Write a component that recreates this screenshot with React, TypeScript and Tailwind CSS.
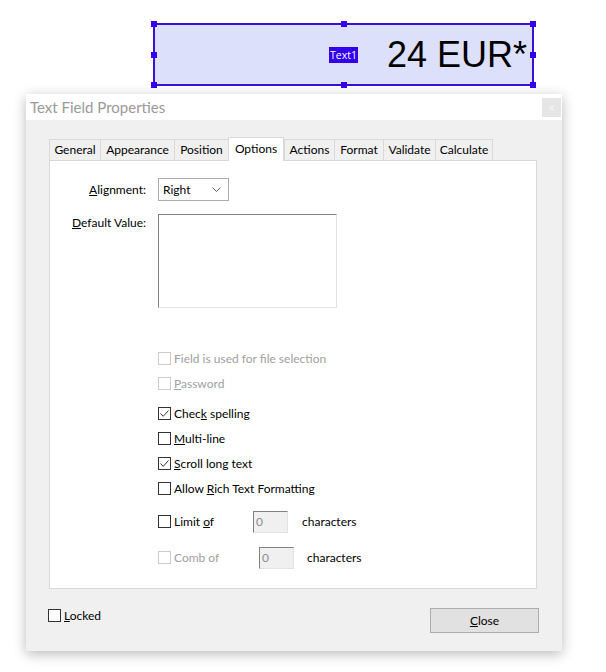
import React from "react";

type BoxProps = { checked?: boolean; disabled?: boolean };

const CheckBox = ({ checked, disabled }: BoxProps) => (
  <span
    className={`flex h-[13px] w-[13px] shrink-0 items-center justify-center border bg-white ${
      disabled ? "border-[#cccccc]" : "border-[#333333]"
    }`}
  >
    {checked && (
      <svg width="11" height="11" viewBox="0 0 11 11">
        <path d="M1.5 5.5 L4.2 8.3 L9.5 2.5" fill="none" stroke="#333" strokeWidth="1" />
      </svg>
    )}
  </span>
);

const Row = ({
  children,
  checked,
  disabled,
  className = "",
}: BoxProps & { children: React.ReactNode; className?: string }) => (
  <div className={`flex h-[25px] items-center ${className}`}>
    <CheckBox checked={checked} disabled={disabled} />
    <span className={`ml-[3px] pt-px ${disabled ? "text-[#a0a0a0]" : "text-black"}`}>{children}</span>
  </div>
);

const tabs = [
  { name: "General", w: "w-[52px]" },
  { name: "Appearance", w: "w-[75px]" },
  { name: "Position", w: "w-[55px]" },
  { name: "Options", w: "w-[56px]", active: true },
  { name: "Actions", w: "w-[51px]" },
  { name: "Format", w: "w-[50px]" },
  { name: "Validate", w: "w-[53px]" },
  { name: "Calculate", w: "w-[58px]" },
];

export default function App() {
  return (
    <div className="relative h-[672px] w-[606px] overflow-hidden bg-white pt-[23px] font-['Lato',sans-serif] text-[12px]">
      {/* form field on the page */}
      <div className="relative ml-[153px] flex h-[63px] w-[381px] items-center justify-end border-2 border-[#3a0fd6] bg-[#dde0fb] pr-[5px]">
        <span className="bg-[#3300ee] px-[1px] font-['Open_Sans',sans-serif] text-[10.5px] leading-[16px] text-white">
          Text1
        </span>
        <span className="ml-[29px] font-['Liberation_Sans',sans-serif] text-[36px] leading-[40px] text-black">
          24 EUR*
        </span>
        <span className="absolute -left-[4px] -top-[4px] h-[6px] w-[6px] bg-[#3300ee]" />
        <span className="absolute -right-[4px] -top-[4px] h-[6px] w-[6px] bg-[#3300ee]" />
        <span className="absolute -bottom-[4px] -left-[4px] h-[6px] w-[6px] bg-[#3300ee]" />
        <span className="absolute -bottom-[4px] -right-[4px] h-[6px] w-[6px] bg-[#3300ee]" />
        <span className="absolute -top-[4px] left-1/2 h-[6px] w-[6px] -translate-x-1/2 bg-[#3300ee]" />
        <span className="absolute -bottom-[4px] left-1/2 h-[6px] w-[6px] -translate-x-1/2 bg-[#3300ee]" />
        <span className="absolute -left-[4px] top-1/2 h-[6px] w-[6px] -translate-y-1/2 bg-[#3300ee]" />
        <span className="absolute -right-[4px] top-1/2 h-[6px] w-[6px] -translate-y-1/2 bg-[#3300ee]" />
      </div>

      {/* dialog */}
      <div className="ml-[26px] mt-[8px] flex h-[557px] w-[536px] flex-col bg-[#f0f0f0] shadow-[0_3px_12px_rgba(0,0,0,0.28)]">
        <div className="flex h-[26px] items-center justify-between bg-white">
          <span className="pl-[4px] text-[15px] text-[#9a9a9a]">Text Field Properties</span>
          <span className="mr-[1px] flex h-[19px] w-[19px] items-center justify-center bg-[#e5e5e5] text-[11px] leading-none text-[#f8f8f8]">
            ×
          </span>
        </div>

        <div className="px-[23px] pt-[17px]">
          <div className="flex h-[23px] items-end">
            {tabs.map((t) =>
              t.active ? (
                <div
                  key={t.name}
                  className={`relative z-10 -mb-px flex h-[24px] items-center justify-center border border-b-0 border-[#d9d9d9] bg-white pb-[2px] ${t.w}`}
                >
                  {t.name}
                </div>
              ) : (
                <div
                  key={t.name}
                  className={`-mr-px flex h-[21px] items-center justify-center border border-b-0 border-[#d9d9d9] bg-[#f0f0f0] ${t.w}`}
                >
                  {t.name}
                </div>
              )
            )}
          </div>

          <div className="h-[429px] w-[488px] border border-[#d9d9d9] bg-white pt-[17px]">
            <div className="flex h-[23px] items-center">
              <span className="w-[96px] pt-px text-right">
                <u>A</u>lignment:
              </span>
              <div className="ml-[12px] flex h-[23px] w-[71px] items-center justify-between border border-[#acacac] bg-white pl-[4px] pr-[7px]">
                <span className="pt-px">Right</span>
                <svg width="9" height="6" viewBox="0 0 9 6">
                  <path d="M0.5 0.5 L4.5 4.5 L8.5 0.5" fill="none" stroke="#555" strokeWidth="1" />
                </svg>
              </div>
            </div>

            <div className="mt-[13px] flex items-start">
              <span className="w-[96px] text-right">
                <u>D</u>efault Value:
              </span>
              <div className="ml-[12px] h-[94px] w-[179px] border border-b-[#e3e3e3] border-l-[#828282] border-r-[#e3e3e3] border-t-[#828282] bg-white" />
            </div>

            <div className="ml-[108px] mt-[38px]">
              <Row disabled>Field is used for file selection</Row>
              <Row disabled>
                <u>P</u>assword
              </Row>
              <Row checked className="mt-[5px]">
                Chec<u>k</u> spelling
              </Row>
              <Row>
                <u>M</u>ulti-line
              </Row>
              <Row checked>
                <u>S</u>croll long text
              </Row>
              <Row>
                Allow <u>R</u>ich Text Formatting
              </Row>

              <div className="mt-[8px] flex h-[25px] items-center">
                <div className="flex w-[95px] items-center">
                  <CheckBox />
                  <span className="ml-[3px] pt-px">
                    Limit <u>o</u>f
                  </span>
                </div>
                <div className="flex h-[22px] w-[35px] items-center border border-b-[#e3e3e3] border-l-[#828282] border-r-[#e3e3e3] border-t-[#828282] bg-[#f0f0f0] pl-[2px] text-[#8c8c8c]">
                  0
                </div>
                <span className="ml-[14px] pt-px">characters</span>
              </div>

              <div className="mt-[11px] flex h-[25px] items-center">
                <div className="flex w-[101px] items-center">
                  <CheckBox disabled />
                  <span className="ml-[3px] pt-px text-[#a0a0a0]">Comb of</span>
                </div>
                <div className="flex h-[22px] w-[35px] items-center border border-b-[#e3e3e3] border-l-[#828282] border-r-[#e3e3e3] border-t-[#828282] bg-[#f0f0f0] pl-[2px] text-[#8c8c8c]">
                  0
                </div>
                <span className="ml-[13px] pt-px">characters</span>
              </div>
            </div>
          </div>

          <div className="mt-[19px] flex h-[25px] items-start justify-between">
            <div className="-ml-px mt-px flex items-center">
              <CheckBox />
              <span className="ml-[3px] leading-[13px]">
                <u>L</u>ocked
              </span>
            </div>
            <div className="flex h-[25px] w-[109px] items-center justify-center border border-[#adadad] bg-[#e1e1e1]">
              <span className="pt-px">
                <u>C</u>lose
              </span>
            </div>
          </div>
        </div>
      </div>
    </div>
  );
}
